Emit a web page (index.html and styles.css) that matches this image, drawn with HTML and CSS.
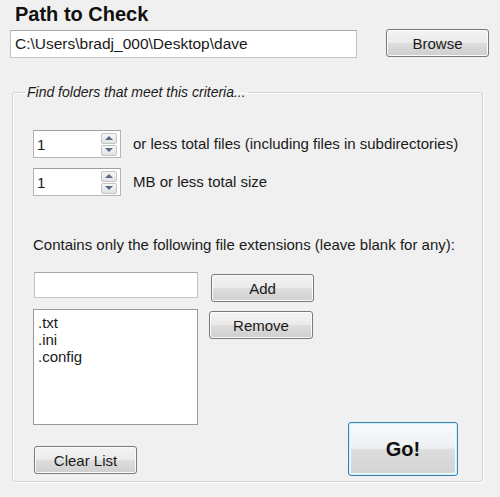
FILE: index.html
```html
<!DOCTYPE html>
<html>
<head>
<meta charset="utf-8">
<link rel="stylesheet" href="styles.css">
</head>
<body>
<h1 class="title">Path to Check</h1>
<div class="path-row">
  <div class="textbox path-box">C:\Users\bradj_000\Desktop\dave</div>
  <button class="btn browse">Browse</button>
</div>
<fieldset class="group">
  <legend class="legend">Find folders that meet this criteria...</legend>
  <div class="spin-row first">
    <div class="spin">
      <span class="spin-val">1</span>
      <div class="spin-btns">
        <span class="spin-btn"><span class="tri up"></span></span>
        <span class="spin-btn"><span class="tri down"></span></span>
      </div>
    </div>
    <span class="label">or less total files (including files in subdirectories)</span>
  </div>
  <div class="spin-row">
    <div class="spin">
      <span class="spin-val">1</span>
      <div class="spin-btns">
        <span class="spin-btn"><span class="tri up"></span></span>
        <span class="spin-btn"><span class="tri down"></span></span>
      </div>
    </div>
    <span class="label">MB or less total size</span>
  </div>
  <div class="label contains">Contains only the following file extensions (leave blank for any):</div>
  <div class="lower">
    <div class="left-col">
      <div class="textbox ext-box"></div>
      <div class="listbox">
        <div class="item">.txt</div>
        <div class="item">.ini</div>
        <div class="item">.config</div>
      </div>
      <button class="btn clear">Clear List</button>
    </div>
    <div class="mid-col">
      <button class="btn add">Add</button>
      <button class="btn remove">Remove</button>
    </div>
    <button class="btn go">Go!</button>
  </div>
</fieldset>
</body>
</html>
```
FILE: styles.css
```css
* { box-sizing: border-box; }
html, body {
  margin: 0;
  padding: 0;
}
body {
  width: 500px;
  height: 497px;
  overflow: hidden;
  background: #f0f0f0;
  font-family: "Liberation Sans", Arial, sans-serif;
  font-size: 15px;
  color: #1a1a1a;
}
.title {
  margin: 0;
  padding: 3px 0 0 15px;
  font-size: 20px;
  line-height: 23px;
  font-weight: bold;
  color: #111;
}
.path-row {
  display: flex;
  align-items: flex-start;
  margin-top: 4px;
  padding-left: 10px;
}
.textbox {
  background: #fff;
  border: 1px solid #c2c2c2;
  border-top-color: #a8a8a8;
}
.path-box {
  width: 347px;
  height: 28px;
  line-height: 26px;
  padding-left: 4px;
  font-size: 15.5px;
}
.btn {
  font-family: "Liberation Sans", Arial, sans-serif;
  font-size: 15px;
  color: #1a1a1a;
  border: 1px solid #7a7a7a;
  border-radius: 3px;
  background: linear-gradient(#f3f3f3 0%, #ebebeb 48%, #dddddd 52%, #cfcfcf 100%);
  box-shadow: inset 0 0 0 1px #fbfbfb;
  padding: 0;
  height: 28px;
}
.browse {
  width: 103px;
  margin-left: 29px;
  margin-top: -1px;
}
.group {
  margin: 26px 0 0 12px;
  width: 471px;
  padding: 0 0 7px 0;
  border: 1px solid #d2d2d2;
  border-radius: 3px;
  box-shadow: inset 1px 1px 0 #fff, 1px 1px 0 #fff;
}
.legend {
  margin-left: 12px;
  padding: 0 2px;
  font-style: italic;
  line-height: 16px;
  font-size: 14px;
  color: #1a1a1a;
}
.spin-row {
  display: flex;
  align-items: center;
  margin-left: 20px;
  margin-top: 10px;
}
.spin-row.first { margin-top: 30px; }
.spin {
  width: 88px;
  height: 28px;
  background: #fff;
  border: 1px solid #b5b5b5;
  border-top-color: #a0a0a0;
  display: flex;
  align-items: center;
  justify-content: space-between;
  padding: 0 3px 0 3px;
}
.spin-val {
  font-size: 15px;
}
.spin-btns {
  display: flex;
  flex-direction: column;
  gap: 1px;
}
.spin-btn {
  width: 16px;
  height: 11px;
  border: 1px solid #c4c4c4;
  border-radius: 2px;
  background: linear-gradient(#f6f6f6, #e2e2e2);
  display: flex;
  align-items: center;
  justify-content: center;
}
.tri {
  width: 0;
  height: 0;
  border-left: 4px solid transparent;
  border-right: 4px solid transparent;
}
.tri.up { border-bottom: 4px solid #5a6a86; }
.tri.down { border-top: 4px solid #5a6a86; }
.label {
  margin-left: 12px;
  line-height: 18px;
}
.label.contains {
  margin: 40px 0 0 20px;
}
.lower {
  display: flex;
  margin-top: 18px;
  margin-left: 20px;
}
.left-col {
  display: flex;
  flex-direction: column;
  width: 165px;
}
.ext-box {
  width: 164px;
  height: 26px;
  margin-left: 1px;
}
.listbox {
  margin-top: 11px;
  height: 116px;
  background: #fff;
  border: 1px solid #9a9a9a;
  padding: 4px 4px;
}
.item {
  line-height: 17px;
  font-size: 15px;
}
.clear {
  margin-top: 21px;
  margin-left: 1px;
  width: 103px;
}
.mid-col {
  display: flex;
  flex-direction: column;
  margin-left: 11px;
}
.add {
  width: 103px;
  margin-left: 2px;
  margin-top: 2px;
}
.remove {
  width: 104px;
  margin-top: 9px;
}
.go {
  align-self: flex-end;
  margin-left: auto;
  margin-right: 24px;
  margin-bottom: -2px;
  width: 110px;
  height: 54px;
  font-size: 20px;
  font-weight: bold;
  color: #111;
  border-color: #3c7fb1;
  background: linear-gradient(#f7f9fa 0%, #eef0f1 48%, #dcdcdc 52%, #d2d3d4 100%);
  box-shadow: inset 0 0 0 1px #cdeefb, inset 0 0 0 2px #f4f9fb;
}
```
